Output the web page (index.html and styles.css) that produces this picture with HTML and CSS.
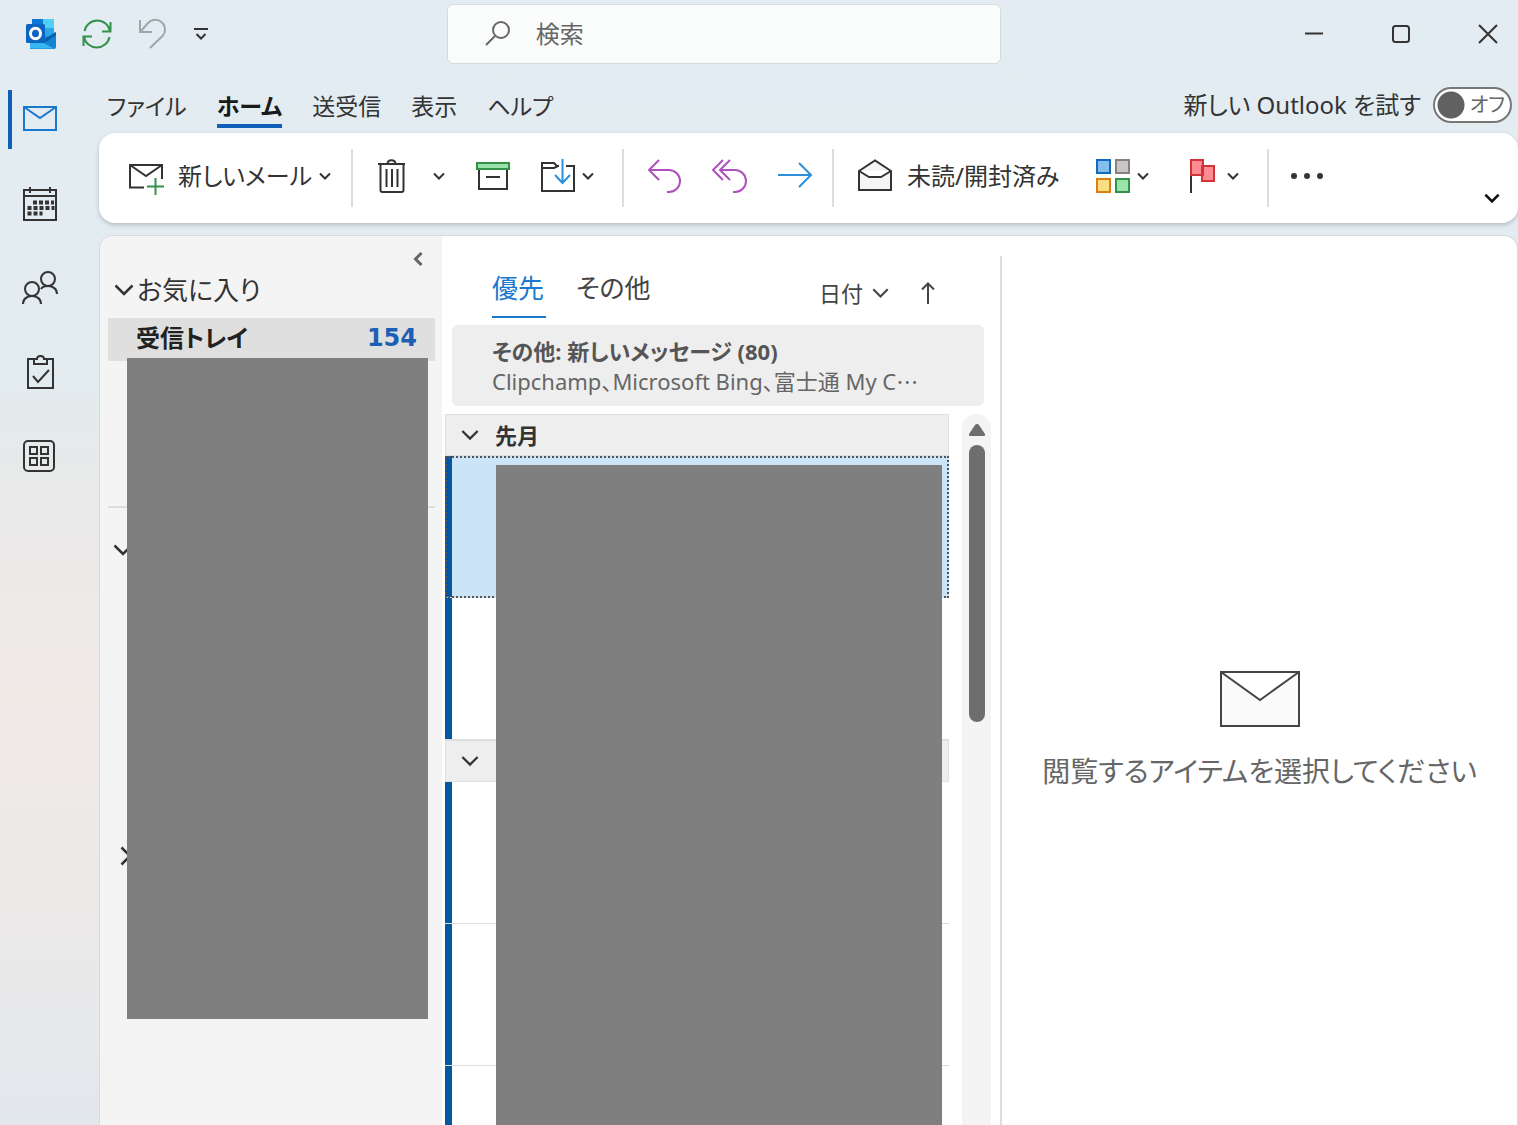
FILE: index.html
```html
<!DOCTYPE html>
<html lang="ja">
<head>
<meta charset="utf-8">
<meta name="viewport" content="width=device-width, initial-scale=1">
<title>Outlook</title>
<link rel="stylesheet" href="styles.css">
</head>
<body>
<svg class="defs" aria-hidden="true">
  <symbol id="chev" viewBox="0 0 12 8"><path d="M1 1.5 6 6.5 11 1.5" fill="none" stroke="currentColor" stroke-width="2"/></symbol>
  <symbol id="chev-lg" viewBox="0 0 20 12"><path d="M1.5 1.5 10 10 18.500 1.500" fill="none" stroke="currentColor" stroke-width="2.500"/></symbol>
</svg>
<div class="app">
  <header class="titlebar">
    <div class="quick">
      <svg class="logo" viewBox="0 0 30 30" aria-label="Outlook" role="img">
        <path d="M6 0h22v20H6z" fill="#1490df"/><path d="M6 0h11v8H6z" fill="#0f78d4"/><path d="M17 0h11v9H17z" fill="#50d0f5"/><path d="M17 9h11v8H17z" fill="#28a8ea"/>
        <path d="M4 18l13 3 13-8v15a2 2 0 0 1-2 2H4z" fill="#1683d2"/><path d="M4 17l24 12.500H4z" fill="#35b8f1"/><path d="M17 21l13-8v3l-10 7z" fill="#0a5ca8"/>
        <rect x="0" y="5" width="19" height="19" rx="1.500" fill="#0b64c0"/><ellipse cx="9.500" cy="14.500" rx="5" ry="5.300" fill="none" stroke="#fff" stroke-width="3"/>
      </svg>
      <button class="icon-btn" aria-label="すべて送受信"><svg class="i30 green" viewBox="0 0 30 30"><path d="M2.500 12A13 13 0 0 1 28 12M28.500 3v9.500H20M27.500 18A13 13 0 0 1 2 18M1.500 27V17.500H10"/></svg></button>
      <button class="icon-btn" aria-label="元に戻す"><svg class="i30 gray" viewBox="0 0 30 30"><path d="M2 1v12h12M2.500 12.500 10 4A9.500 9.500 0 0 1 24.500 17L12 29"/></svg></button>
      <button class="icon-btn" aria-label="クイック アクセスのカスタマイズ"><svg class="i14" viewBox="0 0 14 14"><path d="M0 2h14M2.500 7 7 11.500 11.500 7"/></svg></button>
    </div>
    <form class="search" role="search">
      <svg viewBox="0 0 28 28"><circle cx="17" cy="10" r="8"/><path d="M11 16 2 25"/></svg>
      <input type="search" aria-label="検索" placeholder="検索">
    </form>
    <div class="window">
      <button class="icon-btn" aria-label="最小化"><svg class="i20" viewBox="0 0 20 20"><path d="M1 9.500h18"/></svg></button>
      <button class="icon-btn" aria-label="最大化"><svg class="i20" viewBox="0 0 20 20"><rect x="2" y="2" width="16" height="16" rx="2.500"/></svg></button>
      <button class="icon-btn" aria-label="閉じる"><svg class="i20" viewBox="0 0 20 20"><path d="M1 1 19 19M19 1 1 19"/></svg></button>
    </div>
  </header>

  <div class="shell">
    <nav class="rail" aria-label="モジュール">
      <button class="rail-btn current" aria-label="メール"><svg viewBox="0 0 36 36"><path d="M2 5h32v23H2zM2 5l16 11L34 5"/></svg></button>
      <button class="rail-btn" aria-label="予定表"><svg viewBox="0 0 36 36"><path d="M2 4h32v30H2zM2 10h32M8 1v6M28 1v6"/><path class="dots" d="M11 16.500h21M5.500 22h27M5.500 27.500h15"/></svg></button>
      <button class="rail-btn" aria-label="連絡先"><svg viewBox="0 0 36 36"><circle cx="10" cy="19" r="7"/><circle cx="26" cy="9" r="7"/><path d="M1 34c0-5 4-8 9-8s9 3 9 8M19 19c1-2 4-3 7-3 5 0 9 3 9 8"/></svg></button>
      <button class="rail-btn" aria-label="タスク"><svg viewBox="0 0 36 36"><path d="M12 5H6v29h25V5h-6M12 10V5h3c0-4 7-4 7 0h3v5zM11 22l5 6 11-12"/></svg></button>
      <button class="rail-btn" aria-label="その他のアプリ"><svg viewBox="0 0 36 36"><rect x="2" y="3" width="30" height="30" rx="4"/><path d="M8 9h7v7H8zM19 9h7v7h-7zM8 20h7v7H8zM19 20h7v7h-7z"/></svg></button>
    </nav>

    <main class="main">
      <div class="tabs">
        <nav class="tab-list" aria-label="リボン">
          <button class="tab">ファイル</button>
          <button class="tab active">ホーム</button>
          <button class="tab">送受信</button>
          <button class="tab">表示</button>
          <button class="tab">ヘルプ</button>
        </nav>
        <label class="try"><span>新しい Outlook を試す</span>
          <span class="switch"><input type="checkbox" role="switch" aria-label="新しい Outlook を試す"><span class="off">オフ</span></span>
        </label>
      </div>

      <div class="ribbon" role="toolbar" aria-label="ホーム">
        <div class="group new">
          <button class="cmd"><svg class="ic" viewBox="0 0 34 34"><path d="M15 28.500H1V6h32v14M1 6l16 11L33 6"/><path class="green" d="M18 27.500h17M26.500 19v17"/></svg><span>新しいメール</span></button>
          <button class="cmd" aria-label="新しいアイテム"><svg class="chev"><use href="#chev"/></svg></button>
        </div>
        <div class="group">
          <button class="cmd" aria-label="削除"><svg class="ic" viewBox="0 0 34 34"><path d="M1 5h27M3.500 5v26a2 2 0 0 0 2 2h19a2 2 0 0 0 2-2V5M10.500 5c0-5 8-5 8 0M9.500 10v18M15 10v18M20.500 10v18"/></svg></button>
          <button class="cmd drop" aria-label="削除オプション"><svg class="chev"><use href="#chev"/></svg></button>
          <button class="cmd" aria-label="アーカイブ"><svg class="ic" viewBox="0 0 34 34"><path d="M3 11v19h28V11M10 18h14"/><path d="M1 4h32v6H1z" stroke="#33914a" fill="#9be3ab"/></svg></button>
          <button class="cmd" aria-label="移動"><svg class="ic" viewBox="0 0 34 34"><path d="M18 7h-2l-3-3H1v28h32V7h-8M1 9h12l4-2"/><path class="blue" d="M21.500 0v24M14 16l7.500 8 7.500-8"/></svg><svg class="chev"><use href="#chev"/></svg></button>
        </div>
        <div class="group reply">
          <button class="cmd" aria-label="返信"><svg class="ic purple" viewBox="0 0 34 34"><path d="M11 1 1 11l10 10M1 11h20a11 11 0 0 1 0 22h-2"/></svg></button>
          <button class="cmd" aria-label="全員に返信"><svg class="ic purple" viewBox="0 0 34 34"><path d="M10 1 0 11l10 10M17 1 7 11l10 10M7 11h15a11 11 0 0 1 0 22h-2"/></svg></button>
          <button class="cmd" aria-label="転送"><svg class="ic blue" viewBox="0 0 34 34"><path d="M0 16h32M21 4l12 12-12 12"/></svg></button>
        </div>
        <div class="group tags">
          <button class="cmd"><svg class="ic" viewBox="0 0 34 34"><path d="M1 12 17 1.500 33 12v19H1zM1 12l10 6h12l10-6" fill="#f5f5f5"/></svg><span>未読/開封済み</span></button>
          <button class="cmd" aria-label="分類"><svg class="ic" viewBox="0 0 34 34"><path d="M1 1h13v13H1z" stroke="#1468b8" fill="#83beec"/><path d="M20 1h13v13H20z" stroke="#85807e" fill="#c8c6c4"/><path d="M1 20h13v13H1z" stroke="#dd7d13" fill="#fbdd82"/><path d="M20 20h13v13H20z" stroke="#33914a" fill="#9be3ab"/></svg><svg class="chev"><use href="#chev"/></svg></button>
          <button class="cmd" aria-label="フラグ"><svg class="ic" viewBox="0 0 34 34"><path d="M5 17v17"/><path d="M16 7h12v15H16z M5 1h12v15H5z" stroke="#d13438" fill="#ff8b92"/></svg><svg class="chev"><use href="#chev"/></svg></button>
        </div>
        <div class="group">
          <button class="cmd" aria-label="その他のコマンド"><svg class="ic" viewBox="0 0 34 34"><g fill="#333" stroke="none"><circle cx="3" cy="17" r="3"/><circle cx="16" cy="17" r="3"/><circle cx="29" cy="17" r="3"/></g></svg></button>
        </div>
        <button class="cmd collapse" aria-label="リボンを折りたたむ"><svg class="chev-lg"><use href="#chev"/></svg></button>
      </div>

      <div class="panes">
        <aside class="folders">
          <button class="fold" aria-label="フォルダー ウィンドウの最小化"><svg viewBox="0 0 10 14"><path d="M8.500 1 2.500 7l6 6"/></svg></button>
          <h2 class="fav"><svg class="arrow"><use href="#chev-lg"/></svg>お気に入り</h2>
          <a class="inbox" href="#inbox"><span>受信トレイ</span><span class="count">154</span></a>
          <hr class="rule">
          <div class="account"><svg class="arrow"><use href="#chev-lg"/></svg></div>
          <div class="account sub"><svg class="arrow side"><use href="#chev-lg"/></svg></div>
          <div class="mask folder-mask"></div>
        </aside>

        <section class="list">
          <div class="list-head">
            <div class="filters">
              <button class="filter on">優先</button>
              <button class="filter">その他</button>
            </div>
            <div class="sort">
              <button class="sort-by">日付<svg class="sort-chev"><use href="#chev-lg"/></svg></button>
              <button class="sort-dir" aria-label="並べ替え順"><svg viewBox="0 0 14 22"><path d="M7 22V1.500M1 7.500l6-6 6 6"/></svg></button>
            </div>
          </div>
          <a class="notice" href="#other"><strong>その他: 新しいメッセージ (80)</strong><span>Clipchamp、Microsoft Bing、富士通 My C<span class="ellipsis">…</span></span></a>
          <div class="scroller">
            <div class="messages">
              <h3 class="month"><svg><use href="#chev-lg"/></svg>先月</h3>
              <div class="msg selected"></div>
              <div class="msg"></div>
              <h3 class="month"><svg><use href="#chev-lg"/></svg></h3>
              <div class="msg"></div>
              <div class="msg"></div>
              <div class="msg"></div>
              <div class="mask list-mask"></div>
            </div>
            <div class="scrollbar"><svg viewBox="0 0 16 12"><path d="M8 0c1 0 1 0 2 1l6 9c0 2 0 2-2 2H2c-2 0-2 0-2-2l6-9c1-1 1-1 2-1z"/></svg><div class="thumb"></div></div>
          </div>
        </section>

        <section class="reading">
          <svg viewBox="0 0 80 56"><path d="M1 1h78v54H1zM1 1l39 28L79 1"/></svg>
          <p>閲覧するアイテムを選択してください</p>
        </section>
      </div>
    </main>
  </div>
</div>
</body>
</html>
```
FILE: styles.css
```css
* { box-sizing: border-box; }

body {
  margin: 0;
  color: #333;
  font-family: "Noto Sans", "Noto Sans CJK JP", sans-serif;
  font-size: 24px;
  line-height: 32px;
  font-feature-settings: "palt";
}

button {
  padding: 0;
  border: 0;
  background: none;
  color: inherit;
  font: inherit;
  font-feature-settings: inherit;
}

a { color: inherit; text-decoration: none; }
h2, h3, p { margin: 0; font-weight: 400; }
svg { display: block; flex: none; fill: none; stroke: currentColor; stroke-width: 2; }
.defs { position: absolute; width: 0; height: 0; }

.app {
  display: flex;
  flex-direction: column;
  height: 100vh;
  overflow: hidden;
  background: linear-gradient(180deg, #e3ecf2 0%, #e2ebee 34%, #e9e9e9 44%, #f0eae7 62%, #ece9e8 80%, #e3e8ed 100%);
}

.green { stroke: #33914a; }
.gray { stroke: #a0a5aa; }
.blue { stroke: #2b8fd9; }
.purple { stroke: #ae50bd; }

/* title bar */
.titlebar {
  display: grid;
  grid-template-columns: 11fr 554px 13fr;
  align-items: center;
  height: 68px;
  padding: 0 20px 0 26px;
  flex: none;
}
.quick, .window { display: flex; align-items: center; }
.quick { gap: 26px; }
.logo { width: 30px; height: 30px; stroke: none; }
.i30 { width: 30px; height: 30px; }
.i20 { width: 20px; height: 20px; }
.i14 { width: 14px; height: 14px; }
.search {
  display: flex;
  align-items: center;
  gap: 24px;
  height: 60px;
  padding: 0 36px;
  border: 1px solid #d5dadd;
  border-radius: 6px;
  background: #fafbfb;
  color: #666;
}
.search svg { width: 28px; height: 28px; }
.search input {
  flex: 1;
  min-width: 0;
  padding: 0;
  border: 0;
  outline: 0;
  background: none;
  font: inherit;
}
.search input::placeholder { color: #666; opacity: 1; }
.window { gap: 67px; justify-content: flex-end; }

.shell { display: flex; flex: 1; min-height: 0; }

/* module rail */
.rail {
  display: flex;
  flex-direction: column;
  gap: 25px;
  width: 99px;
  padding-top: 22px;
  flex: none;
}
.rail-btn {
  display: flex;
  align-items: center;
  height: 59px;
  margin-left: 8px;
  padding-left: 10px;
  border-left: 4px solid transparent;
}
.rail-btn svg { width: 36px; height: 36px; }
.rail-btn.current { border-color: #0f5fb8; }
.rail-btn.current svg { color: #1a78cf; }
.dots { stroke-width: 4; stroke-dasharray: 4 2; }

/* ribbon */
.main { display: flex; flex-direction: column; flex: 1; min-width: 0; }
.tabs {
  display: flex;
  justify-content: space-between;
  height: 65px;
  padding: 16px 6px 0 8px;
  flex: none;
}
.tab-list { display: flex; gap: 30px; align-items: flex-start; font-size: 23px; }
.tab { height: 44px; padding-top: 4px; border-bottom: 4px solid transparent; }
.tab.active { border-color: #0f5fb8; color: #1a1a1a; font-weight: 700; }
.try { display: flex; gap: 12px; height: 42px; align-items: center; }
.switch { position: relative; display: flex; }
.switch input {
  appearance: none;
  width: 79px;
  height: 36px;
  margin: 0;
  border: 2px solid #777;
  border-radius: 18px;
  background: radial-gradient(circle at 16px 50%, #616161 13px, #fff 14px);
}
.off { position: absolute; right: 7px; top: 2px; color: #666; font-size: 20px; }

.ribbon {
  display: flex;
  align-items: center;
  height: 90px;
  padding: 0 18px 0 6px;
  flex: none;
  border-radius: 16px;
  background: #fff;
  box-shadow: 0 2px 4px #b5bec4;
}
.group {
  display: flex;
  align-items: center;
  gap: 31px;
  height: 58px;
  padding: 0 28px 0 24px;
  border-right: 2px solid #ddd;
}
.group.new { gap: 7px; padding-right: 20px; }
.group.reply { padding-right: 20px; }
.group.tags { gap: 37px; }
.group:nth-last-child(2) { padding-left: 22px; border: 0; }
.cmd { display: flex; align-items: center; gap: 15px; white-space: nowrap; }
.group .cmd { padding-bottom: 4px; }
.cmd .ic + .chev { margin-left: -8px; }
.cmd.drop { margin-left: -9px; }
.ic { width: 34px; height: 34px; overflow: visible; }
.chev { width: 12px; height: 8px; }
.chev-lg { width: 16px; height: 12px; color: #111; }
.collapse { margin: 40px 0 0 auto; }

/* panes */
.panes {
  display: flex;
  flex: 1;
  min-height: 0;
  margin-top: 12px;
  border: 1px solid #d5dadd;
  border-bottom: 0;
  border-radius: 14px 14px 0 0;
  overflow: hidden;
  background: #fff;
}
.folders {
  position: relative;
  display: flex;
  flex-direction: column;
  width: 342px;
  padding: 16px 7px 0 8px;
  flex: none;
  background: #f4f4f4;
}
.fold { align-self: flex-end; margin-right: 12px; color: #666; }
.fold svg { width: 10px; height: 14px; stroke-width: 3; }
.fav { display: flex; align-items: center; gap: 3px; height: 48px; padding-left: 6px; font-size: 26px; }
.arrow { width: 20px; height: 12px; }
.inbox {
  display: flex;
  justify-content: space-between;
  height: 43px;
  margin-top: 4px;
  padding: 4px 18px 0 28px;
  background: #dfdfdf;
  color: #222;
  font-weight: 700;
}
.count { color: #1d5fb4; font-family: "DejaVu Sans", sans-serif; }
.rule { width: 100%; margin: 145px 0 0; border: 0; border-top: 2px solid #ddd; }
.account { height: 306px; padding: 36px 0 0 5px; }
.account.sub { padding-left: 8px; }
.side { transform: rotate(-90deg); }
.mask { position: absolute; background: #7f7f7f; }
.folder-mask { left: 27px; right: 14px; top: 122px; height: 661px; }

.list {
  display: flex;
  flex-direction: column;
  width: 560px;
  flex: none;
  background: linear-gradient(#ddd, #ddd) right 20px / 2px 100% no-repeat;
}
.list-head { display: flex; justify-content: space-between; height: 89px; padding: 36px 67px 0 50px; }
.filters { display: flex; gap: 30px; align-items: flex-start; }
.filter { height: 46px; padding: 0 2px 12px 0; border-bottom: 2px solid transparent; font-size: 26px; color: #444; }
.filter.on { border-color: #1a78cf; color: #1a78cf; }
.sort { display: flex; gap: 32px; align-items: flex-start; padding-top: 5px; font-size: 22px; color: #444; }
.sort-by { display: flex; align-items: center; gap: 9px; }
.sort-chev { width: 17px; height: 12px; }
.sort-dir svg { width: 14px; height: 22px; margin-top: 5px; }
.notice {
  display: flex;
  flex-direction: column;
  height: 81px;
  margin: 0 18px 0 10px;
  padding: 12px 0 0 40px;
  border-radius: 6px;
  background: #eee;
  color: #666;
  font-size: 22px;
  line-height: 29px;
  white-space: nowrap;
}
.notice strong { color: #555; }
.ellipsis { font-family: "Noto Sans CJK JP", sans-serif; font-feature-settings: normal; }
.scroller { display: flex; flex: 1; gap: 13px; min-height: 0; margin-top: 8px; padding: 0 11px 0 3px; }
.messages { position: relative; flex: 1; overflow: hidden; }
.month {
  display: flex;
  align-items: center;
  gap: 16px;
  height: 42px;
  padding-left: 15px;
  border: 1px solid #e0e0e0;
  background: #eee;
  font-size: 22px;
  font-weight: 700;
}
.month svg { width: 18px; height: 12px; }
.msg { height: 142px; border-bottom: 1px solid #ddd; background: linear-gradient(#0457a0, #0457a0) left / 7px 100% no-repeat; }
.msg.selected { background-color: #cce4f7; outline: 2px dotted #555; outline-offset: -2px; }
.list-mask { left: 51px; right: 7px; top: 51px; bottom: 0; }
.scrollbar {
  display: flex;
  flex-direction: column;
  align-items: center;
  gap: 9px;
  width: 29px;
  padding-top: 10px;
  border-radius: 14px 14px 0 0;
  background: #f4f4f4;
}
.scrollbar svg { width: 16px; height: 12px; fill: #6e6e6e; stroke: none; }
.thumb { width: 16px; height: 277px; border-radius: 8px; background: #6e6e6e; }

.reading {
  display: flex;
  flex: 1;
  flex-direction: column;
  align-items: center;
  justify-content: center;
  gap: 28px;
  min-width: 0;
  padding-top: 96px;
  color: #666;
  font-size: 28px;
}
.reading svg { width: 80px; height: 56px; color: #444; fill: #fafafa; }
```
